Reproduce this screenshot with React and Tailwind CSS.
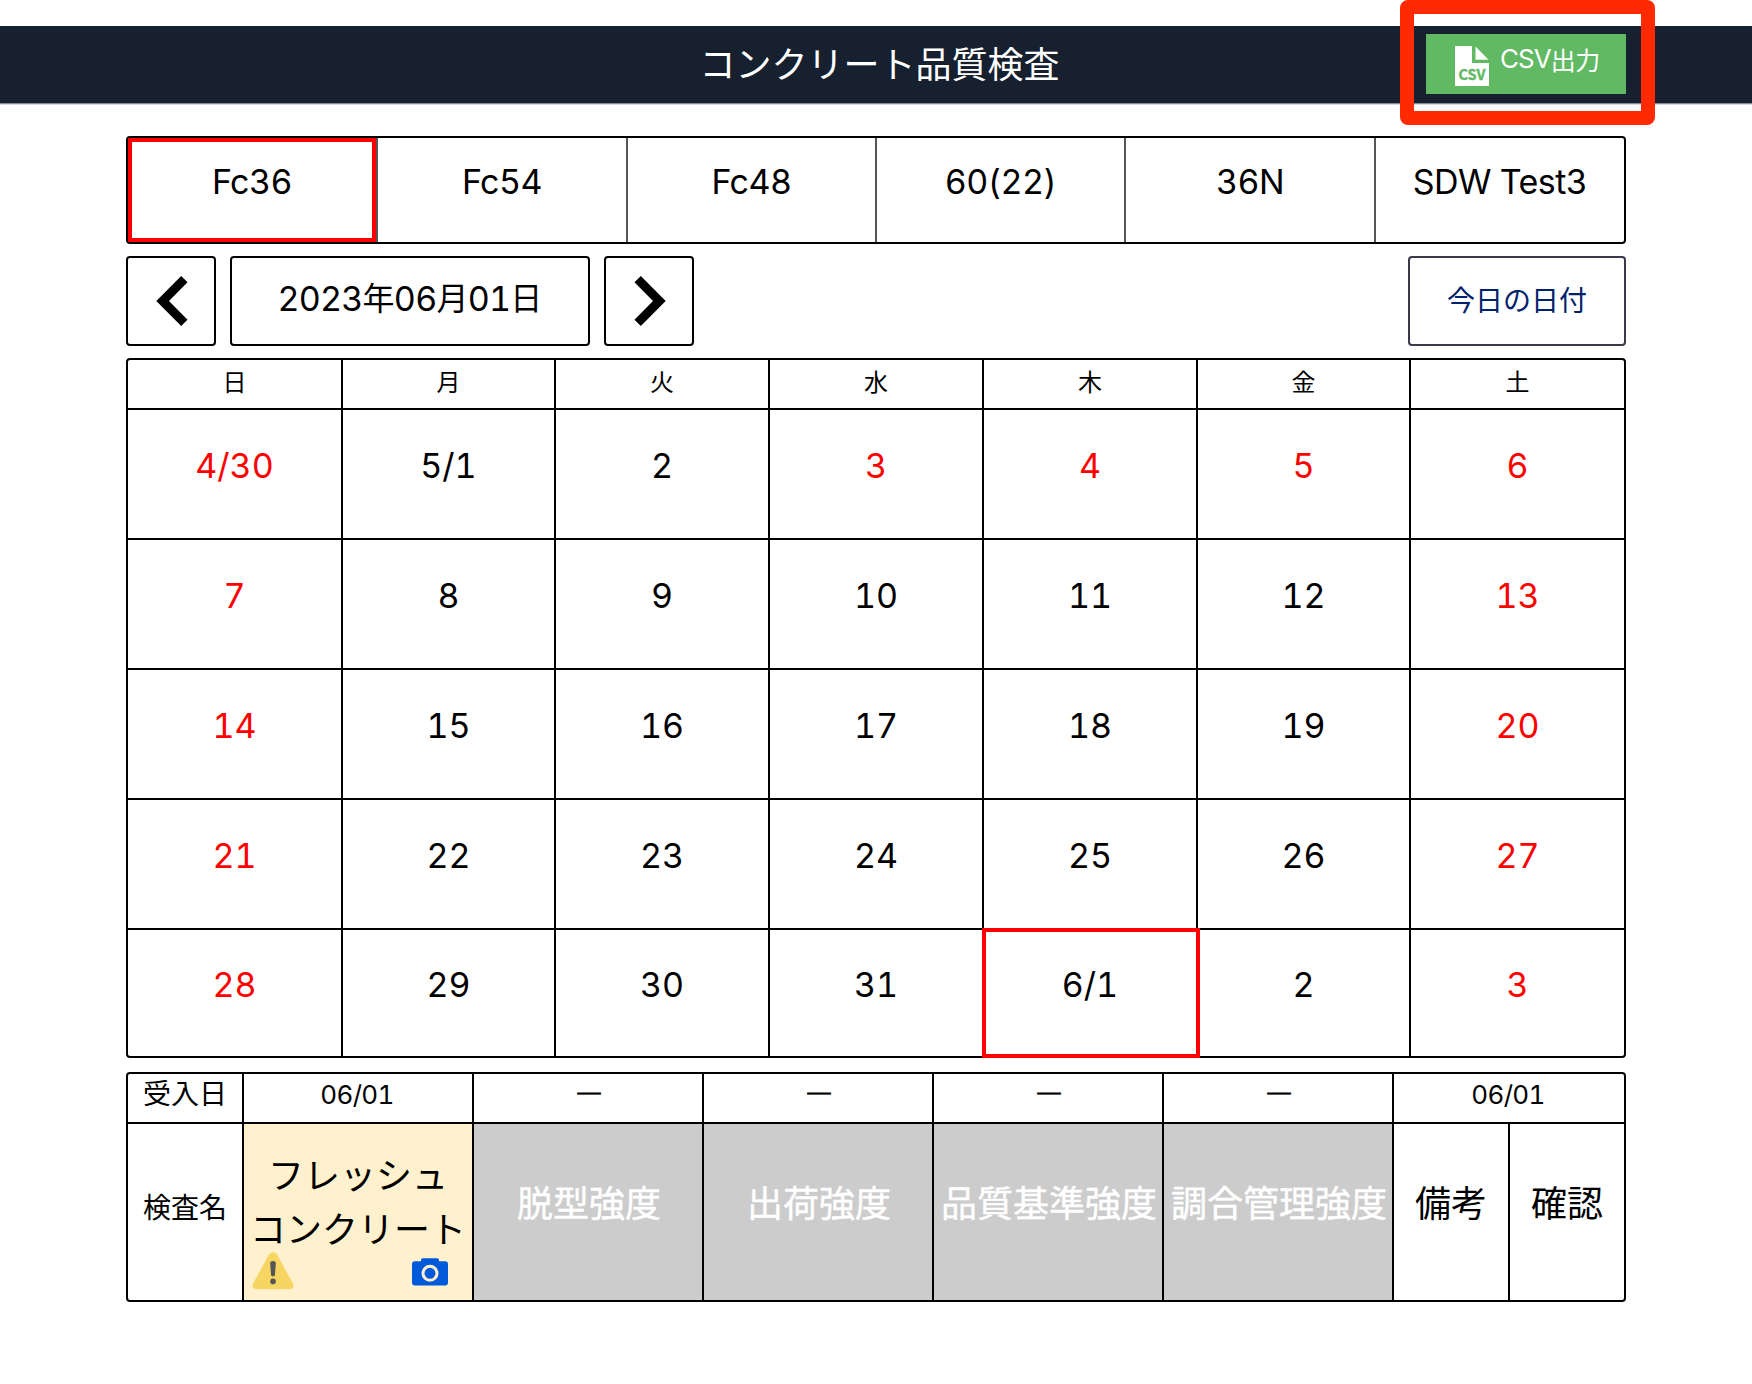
const NUM = "font-['Inter','Noto_Sans_CJK_JP',sans-serif] tabular-nums";

const TABS = ["Fc36", "Fc54", "Fc48", "60(22)", "36N", "SDW Test3"];
const WEEKDAYS = ["日", "月", "火", "水", "木", "金", "土"];
const WEEKS = [
  ["4/30", "5/1", "2", "3", "4", "5", "6"],
  ["7", "8", "9", "10", "11", "12", "13"],
  ["14", "15", "16", "17", "18", "19", "20"],
  ["21", "22", "23", "24", "25", "26", "27"],
  ["28", "29", "30", "31", "6/1", "2", "3"],
];

function isHoliday(week, day) {
  return day === 0 || day === 6 || (week === 0 && day >= 3);
}

function CsvIcon() {
  return (
    <svg width="34" height="40" viewBox="0 0 34 40" className="shrink-0">
      <path d="M0 0H17V17H34V40H0Z" fill="#fff" />
      <path d="M20.5 0.5L33.5 13.7H20.5Z" fill="#fff" />
      <text
        x="17"
        y="34.3"
        textAnchor="middle"
        textLength="27"
        lengthAdjust="spacingAndGlyphs"
        fontFamily="Noto Sans CJK JP, sans-serif"
        fontWeight="700"
        fontSize="15"
        fill="#61b964"
        stroke="#61b964"
        strokeWidth="0.4"
      >
        CSV
      </text>
    </svg>
  );
}

function Chevron({ flip }) {
  return (
    <svg width="32" height="50" viewBox="0 0 32 50" className={flip ? "ml-[2px] -scale-x-100" : "ml-[2px]"}>
      <path d="M0.3 25L25.2 0L31.5 6.2L13 25L31.5 43.8L25.2 50Z" fill="#000" />
    </svg>
  );
}

function WarningIcon() {
  return (
    <svg width="42" height="38" viewBox="0 0 42 38">
      <path
        d="M17 2.6C18.8 -0.4 23.2 -0.4 25 2.6L40.8 31.2C42.6 34.4 40.6 37.3 37.2 37.3H4.8C1.4 37.3 -0.6 34.4 1.2 31.2Z"
        fill="#f7d562"
      />
      <path d="M18.2 11.2C18.2 8.2 23.8 8.2 23.8 11.2L23 22.8C22.8 24.9 19.2 24.9 19 22.8Z" fill="#555" />
      <circle cx="21" cy="29.4" r="2.8" fill="#555" />
    </svg>
  );
}

function CameraIcon() {
  return (
    <svg width="36" height="28" viewBox="0 0 36 28">
      <path
        d="M3 3.2H9V2Q9 0.3 10.7 0.3H25.3Q27 0.3 27 2V3.2H33Q36 3.2 36 6.2V24.6Q36 27.6 33 27.6H3Q0 27.6 0 24.6V6.2Q0 3.2 3 3.2Z"
        fill="#0059d9"
      />
      <circle cx="18" cy="15.3" r="7" fill="none" stroke="#fff0ce" strokeWidth="3" />
    </svg>
  );
}

function Header() {
  return (
    <header className="mt-[26px] border-b border-[#d9dbe0]">
      <div className="grid h-[78px] grid-cols-[1fr_auto_1fr] border-b border-[#868a94] bg-[#16202e]">
        <div />
        <h1 className="h-[77px] pl-[7px] text-[36px] leading-[72px] text-white">コンクリート品質検査</h1>
        <div className="relative flex justify-end pr-[126px]">
          <button className="mt-2 flex h-[60px] w-[200px] bg-[#61b964] pt-3 pl-[29px] text-white">
            <CsvIcon />
            <span className="-mt-px ml-[11px] flex h-7 items-center text-[25px] leading-7 whitespace-nowrap">
              <span className="font-['Inter',sans-serif] text-[26px] tracking-[-1px]">CSV</span>
              <span className="-mt-px tracking-[-0.5px]">出力</span>
            </span>
          </button>
          <div className="absolute top-[-26px] right-[97px] h-[125px] w-[255px] rounded-[8px] border-[14px] border-[#ff2a00]" />
        </div>
      </div>
    </header>
  );
}

function Tabs() {
  return (
    <nav className="grid h-[108px] grid-cols-[250px_250px_249px_249px_250px_248px] rounded-[4px] border-2 border-black">
      {TABS.map((name, i) => (
        <div key={name} className={i < 5 ? "border-r-2 border-[#555]" : ""}>
          <div
            className={`flex h-full items-center justify-center pb-[18px] text-[34px] tracking-[-0.5px] whitespace-nowrap ${NUM} ${
              i === 0 ? "border-4 border-[#ff0000]" : ""
            }`}
          >
            {name}
          </div>
        </div>
      ))}
    </nav>
  );
}

function DateBar() {
  const box = "flex h-[90px] items-center justify-center rounded-[4px] border-2";
  return (
    <div className="mt-3 flex">
      <button className={`${box} w-[90px] border-black`}>
        <Chevron />
      </button>
      <div className={`${box} ml-[14px] w-[360px] border-black pr-px pb-[5px] text-[34px] tracking-[-0.75px] whitespace-nowrap ${NUM}`}>
        <span>2023</span>
        <span className="text-[32px]">年</span>
        <span>06</span>
        <span className="text-[32px]">月</span>
        <span>01</span>
        <span className="text-[32px]">日</span>
      </div>
      <button className={`${box} ml-[14px] w-[90px] border-black`}>
        <Chevron flip />
      </button>
      <button className={`${box} ml-auto w-[218px] border-[#3b384a] pb-1 text-[28px] text-[#00226b]`}>今日の日付</button>
    </div>
  );
}

const WEEK_COLS = "grid grid-cols-[215px_213px_214px_214px_214px_213px_213px]";

function Calendar() {
  return (
    <section className="mt-3 h-[700px] rounded-[4px] border-2 border-black">
      <div className={`${WEEK_COLS} h-[50px] border-b-2 border-black`}>
        {WEEKDAYS.map((d, i) => (
          <div key={d} className={`text-center text-[24px] leading-[42px] ${i < 6 ? "border-r-2 border-black" : ""}`}>
            {d}
          </div>
        ))}
      </div>
      {WEEKS.map((week, w) => (
        <div key={w} className={`${WEEK_COLS} ${w < 4 ? "h-[130px] border-b-2 border-black" : "h-[126px]"}`}>
          {week.map((day, d) => (
            <div
              key={d}
              className={`relative flex items-center justify-center pb-[18px] text-[34px] ${NUM} ${
                d < 6 ? "border-r-2 border-black" : ""
              } ${isHoliday(w, d) ? "text-[#ff0000]" : "text-black"}`}
            >
              {day}
              {day === "6/1" && <div className="absolute -inset-y-[2px] -right-[4px] -left-[2px] border-4 border-[#ff0000]" />}
            </div>
          ))}
        </div>
      ))}
    </section>
  );
}

function Inspections() {
  const line = "border-r-2 border-black";
  const small = `flex items-center justify-center pr-[2px] pb-2 text-[26px] tracking-[-0.7px] ${NUM}`;
  return (
    <section className="mt-[14px] h-[230px] rounded-[4px] border-2 border-black">
      <div className="grid h-[50px] grid-cols-[116px_repeat(6,230px)] border-b-2 border-black">
        <div className={`${line} text-center text-[28px] leading-[36px]`}>受入日</div>
        <div className={`${line} ${small}`}>06/01</div>
        {[0, 1, 2, 3].map((i) => (
          <div
            key={i}
            className={`${line} pl-[2px] text-center text-[27px] leading-[38px] [-webkit-text-stroke:0.8px_#000]`}
          >
            ―
          </div>
        ))}
        <div className={small}>06/01</div>
      </div>
      <div className="grid h-[176px] grid-cols-[116px_repeat(5,230px)_116px_114px] text-[36px] whitespace-nowrap">
        <div className={`${line} text-center text-[28px] leading-[164px]`}>検査名</div>
        <div className={`${line} relative bg-[#fff0ce] pt-[22px] text-center leading-[54px]`}>
          フレッシュ
          <br />
          コンクリート
          <div className="absolute bottom-[10px] left-2">
            <WarningIcon />
          </div>
          <div className="absolute right-6 bottom-[14px]">
            <CameraIcon />
          </div>
        </div>
        {["脱型強度", "出荷強度", "品質基準強度", "調合管理強度"].map((t) => (
          <div
            key={t}
            className={`${line} flex justify-center bg-[#cccccc] pl-[2px] leading-[155px] text-white [-webkit-text-stroke:0.4px_#fff]`}
          >
            {t}
          </div>
        ))}
        <div className={`${line} text-center leading-[155px]`}>備考</div>
        <div className="text-center leading-[155px]">確認</div>
      </div>
    </section>
  );
}

export default function App() {
  return (
    <div className="flow-root h-[1384px] w-[1752px] overflow-hidden bg-white font-['Noto_Sans_CJK_JP',sans-serif] text-black" lang="ja">
      <Header />
      <main className="mx-[126px] mt-[31px]">
        <Tabs />
        <DateBar />
        <Calendar />
        <Inspections />
      </main>
    </div>
  );
}
